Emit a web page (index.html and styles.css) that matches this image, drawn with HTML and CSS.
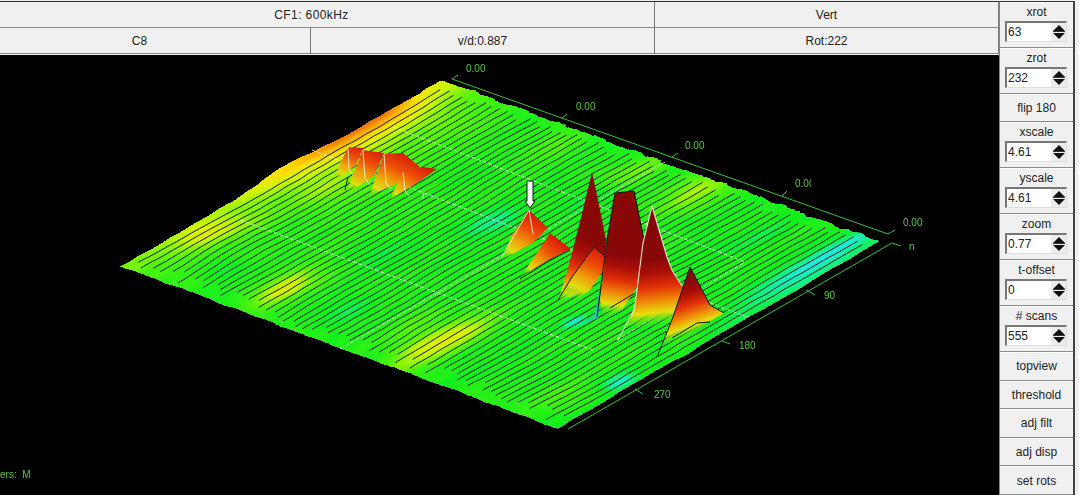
FILE: index.html
```html
<!DOCTYPE html>
<html lang="en">
<head>
<meta charset="utf-8">
<title>CF1: 600kHz</title>
<link rel="stylesheet" href="styles.css">
</head>
<body>
<div class="app">
  <main class="main">
    <header class="readouts">
      <div class="cell cell-wide">CF1: 600kHz</div>
      <div class="cell">Vert</div>
      <div class="cell">C8</div>
      <div class="cell">v/d:0.887</div>
      <div class="cell">Rot:222</div>
    </header>
    <section class="plot">
      <canvas id="surface" class="surface" width="999" height="440"></canvas>
      <span class="tag t0">0.00</span>
      <span class="tag t1">0.00</span>
      <span class="tag t2">0.00</span>
      <span class="tag t3">0.00</span>
      <span class="tag t4">0.00</span>
      <span class="tag a0">n</span>
      <span class="tag a90">90</span>
      <span class="tag a180">180</span>
      <span class="tag a270">270</span>
      <span class="tag legend">ers:  M</span>
    </section>
  </main>
  <aside class="panel">
    <div class="group"><label class="caption">xrot</label><div class="field"><span class="value">63</span><span class="spin"><i class="up"></i><i class="down"></i></span></div></div>
    <div class="group"><label class="caption">zrot</label><div class="field"><span class="value">232</span><span class="spin"><i class="up"></i><i class="down"></i></span></div></div>
    <button class="btn">flip 180</button>
    <div class="group"><label class="caption">xscale</label><div class="field"><span class="value">4.61</span><span class="spin"><i class="up"></i><i class="down"></i></span></div></div>
    <div class="group"><label class="caption">yscale</label><div class="field"><span class="value">4.61</span><span class="spin"><i class="up"></i><i class="down"></i></span></div></div>
    <div class="group"><label class="caption">zoom</label><div class="field"><span class="value">0.77</span><span class="spin"><i class="up"></i><i class="down"></i></span></div></div>
    <div class="group"><label class="caption">t-offset</label><div class="field"><span class="value">0</span><span class="spin"><i class="up"></i><i class="down"></i></span></div></div>
    <div class="group"><label class="caption"># scans</label><div class="field"><span class="value">555</span><span class="spin"><i class="up"></i><i class="down"></i></span></div></div>
    <button class="btn">topview</button>
    <button class="btn">threshold</button>
    <button class="btn">adj filt</button>
    <button class="btn">adj disp</button>
    <button class="btn">set rots</button>
  </aside>
</div>
<script src="plot.js"></script>
</body>
</html>
```
FILE: styles.css
```css
* { box-sizing: border-box; }
html, body { margin: 0; height: 100%; overflow: hidden; }
body {
  background: #f0f0f0;
  color: #222;
  font: 12px/1 "Liberation Sans", Arial, sans-serif;
}
.app {
  display: flex;
  width: 1079px;
  height: 495px;
  padding-top: 1px;
  background: #f0f0f0;
}
.main {
  display: flex;
  flex-direction: column;
  width: 999px;
  overflow: hidden;
}
.readouts {
  display: grid;
  grid-template-columns: 342px 344px 344px;
  grid-template-rows: 26px 26px;
  width: 1030px;
  margin-left: -31px;
  padding-bottom: 1px;
  height: 54px;
  border-top: 1px solid #333;
  background: #f0f0f0;
}
.cell {
  display: flex;
  align-items: center;
  justify-content: center;
  border-right: 1px solid #777;
  border-bottom: 1px solid #888;
  background: #f0f0f0;
}
.cell-wide { grid-column: span 2; letter-spacing: .4px; }
.plot {
  position: relative;
  flex: 1;
  background: #000;
  overflow: hidden;
}
.surface { display: block; }
.tag {
  position: absolute;
  color: #58c84a;
  font-size: 10px;
  line-height: 12px;
  white-space: pre;
}
.t0 { left: 466px; top: 8px; }
.t1 { left: 576px; top: 46px; }
.t2 { left: 685px; top: 85px; }
.t3 { left: 795px; top: 123px; width: 16px; overflow: hidden; }
.t4 { left: 903px; top: 162px; }
.a0 { left: 909px; top: 186px; }
.a90 { left: 824px; top: 235px; }
.a180 { left: 739px; top: 285px; }
.a270 { left: 654px; top: 334px; }
.legend { left: 0; top: 414px; }
.panel {
  display: flex;
  flex-direction: column;
  width: 76px;
  height: 494px;
  border-top: 1px solid #333;
  border-right: 2px solid #444;
  border-left: 1px solid #888;
}
.group, .btn {
  border: 0;
  border-top: 1px solid #fff;
  border-bottom: 1px solid #8a8a8a;
  background: #f0f0f0;
}
.group {
  flex: 45.6 1 0;
  display: flex;
  flex-direction: column;
  align-items: center;
  padding-top: 2px;
}
.btn {
  flex: 29 1 0;
  margin: 0;
  padding: 0;
  color: #222;
  font: inherit;
}
.caption { height: 16px; line-height: 14px; }
.field {
  display: flex;
  align-items: center;
  justify-content: space-between;
  align-self: flex-start;
  width: 62px;
  height: 21px;
  margin-left: 5px;
  border: 1px solid #ddd;
  border-top: 2px solid #777;
  border-left: 2px solid #777;
  background: #fff;
}
.value { padding-left: 1px; }
.spin {
  display: flex;
  flex-direction: column;
  align-items: center;
  gap: 2px;
  width: 15px;
  height: 100%;
  padding-top: 2px;
  background: linear-gradient(#333, #333) center 8px / 12px 1px no-repeat, #ececec;
}
.up, .down {
  display: block;
  width: 0;
  height: 0;
  border-left: 6px solid transparent;
  border-right: 6px solid transparent;
}
.up { border-bottom: 6px solid #111; }
.down { border-top: 6px solid #111; }
```
FILE: plot.js
```js
(function () {
  var canvas = document.getElementById('surface');
  var ctx = canvas.getContext('2d');
  var W = canvas.width, H = canvas.height, TOP = 55;
  var D = [123, 267], A = [445, 80], C = [557, 428];
  var ax = A[0] - D[0], ay = A[1] - D[1], cx = C[0] - D[0], cy = C[1] - D[1];
  var det = ax * cy - ay * cx;

  function toUV(px, py) {
    var x = px - D[0], y = py - D[1];
    return [(x * cy - y * cx) / det, (ax * y - ay * x) / det];
  }
  function hash(i, j) {
    var s = Math.sin(i * 127.1 + j * 311.7) * 43758.5453;
    return s - Math.floor(s);
  }
  function noise(x, y) {
    var i = Math.floor(x), j = Math.floor(y), f = x - i, g = y - j;
    f = f * f * (3 - 2 * f); g = g * g * (3 - 2 * g);
    var a = hash(i, j), b = hash(i + 1, j), c = hash(i, j + 1), d = hash(i + 1, j + 1);
    return a + (b - a) * f + (c - a) * g + (a - b - c + d) * f * g;
  }
  function smooth(a, b, x) {
    var t = Math.max(0, Math.min(1, (x - a) / (b - a)));
    return t * t * (3 - 2 * t);
  }

  var ramp = [
    [0.00, 30, 235, 215], [0.18, 16, 242, 130], [0.34, 16, 240, 30], [0.50, 90, 244, 10],
    [0.66, 205, 244, 6], [0.80, 250, 225, 6], [0.92, 250, 170, 4], [1.00, 244, 120, 4]
  ];
  function colour(t) {
    t = Math.max(0, Math.min(1, t));
    for (var i = 1; i < ramp.length; i++) {
      if (t <= ramp[i][0]) {
        var a = ramp[i - 1], b = ramp[i], f = (t - a[0]) / (b[0] - a[0]);
        return [a[1] + (b[1] - a[1]) * f, a[2] + (b[2] - a[2]) * f, a[3] + (b[3] - a[3]) * f];
      }
    }
    return ramp[ramp.length - 1].slice(1);
  }

  // x, y on screen, spread along the scan, spread across the scans, amount
  var blobs = [
    [285, 288, .10, .035, .32], [435, 345, .14, .04, .34], [410, 325, .09, .03, .12],
    [700, 190, .11, .04, .24], [640, 170, .09, .035, .14], [555, 145, .09, .035, .10],
    [205, 235, .09, .035, .20], [470, 330, .09, .03, .08], [560, 395, .08, .03, .10],
    [225, 270, .05, .03, -.10], [380, 255, .07, .03, -.08], [350, 310, .06, .03, -.10],
    [805, 268, .17, .028, -.32], [845, 245, .07, .012, -.24], [620, 382, .04, .02, -.34],
    [495, 222, .07, .03, -.22], [575, 322, .03, .016, -.34], [590, 200, .07, .03, -.08],
    [760, 235, .08, .03, -.08], [480, 175, .09, .03, -.04], [660, 245, .06, .03, .08],
    [325, 190, .09, .035, .14], [250, 225, .08, .03, .10]
  ].map(function (b) {
    var p = toUV(b[0], b[1]);
    return [p[0], p[1], b[2], b[3], b[4]];
  });

  function field(u, v) {
    var t = .37;
    for (var i = 0; i < blobs.length; i++) {
      var b = blobs[i], du = (u - b[0]) / b[2], dv = (v - b[1]) / b[3];
      t += b[4] * Math.exp(-(du * du + dv * dv));
    }
    // warm ridge along the top-left edge, easing off at the far tip
    var ridge = .2 + .44 * smooth(.25, .75, u) - .3 * smooth(.8, 1, u);
    t += ridge * Math.exp(-Math.max(0, v) / .07);
    // cooler along the front-right edge
    t -= .12 * smooth(.94, 1, v) * smooth(.4, .7, u);
    t += .06 * (noise(u * 9, v * 45) - .5) + .025 * (noise(u * 30, v * 90) - .5);
    return t;
  }

  var img = ctx.createImageData(W, H), data = img.data;
  for (var y = 0; y < H; y++) {
    for (var x = 100; x < 910; x++) {
      var uv = toUV(x + .5, y + TOP + .5), u = uv[0], v = uv[1];
      var lowV = -.003 - .013 * Math.exp(-Math.pow((u - .52) / .11, 2)) - .003 * noise(u * 40, 3);
      var lowU = .006 * (noise(v * 30, 7) - .5) - .002 * hash(Math.floor(v * 140), 9);
      var highU = 1 + .01 * (noise(v * 45, 11) - .6) - .004 * hash(Math.floor(v * 160), 2);
      var highV = 1 + .005 * noise(u * 20, 5);
      if (u < lowU || u > highU || v < lowV || v > highV) continue;
      var rgb = colour(field(u, v));
      var i = 4 * (y * W + x);
      data[i] = rgb[0]; data[i + 1] = rgb[1]; data[i + 2] = rgb[2]; data[i + 3] = 255;
    }
  }
  ctx.putImageData(img, 0, 0);
  ctx.translate(0, -TOP);

  function path(pts) {
    ctx.beginPath();
    pts.forEach(function (p, i) { if (i) ctx.lineTo(p[0], p[1]); else ctx.moveTo(p[0], p[1]); });
  }
  function line(pts, colourName, width, dash) {
    path(pts);
    ctx.strokeStyle = colourName;
    ctx.lineWidth = width || 1;
    ctx.setLineDash(dash || []);
    ctx.stroke();
    ctx.setLineDash([]);
  }

  // scan traces
  var SCANS = 62;
  for (var k = 1; k < SCANS; k++) {
    var start = .012 + .05 * hash(k, 4), end = .985 - .025 * hash(k, 8), trace = [];
    for (var s = start; s < end; s += .008) {
      var off = .75 * (noise(s * 5, k * .14) - .5) + .14 * (noise(s * 26, k * .6) - .5);
      var tv = (k + off) / SCANS;
      trace.push([D[0] + s * ax + tv * cx, D[1] + s * ay + tv * cy]);
    }
    line(trace, '#061408', 1);
  }

  var WHITE = 'rgba(230,252,220,.85)', DASH = [4, 2];
  line([[393, 127], [745, 262]], WHITE, 1, DASH);
  line([[312, 150], [747, 317]], WHITE, 1, DASH);
  line([[240, 220], [593, 350]], WHITE, 1, DASH);
  line([[340, 349], [665, 162]], WHITE, 1, DASH);
  line([[617, 340], [745, 262]], WHITE, 1, DASH);

  var FULL = [[0, '#880808'], [.2, '#a80e08'], [.42, '#e03008'], [.62, '#f08808'], [.8, '#e6e010'], [1, 'rgba(60,228,30,0)']];
  var LOW = [[0, '#d81c08'], [.3, '#ee5008'], [.55, '#f0a008'], [.78, '#dce010'], [1, 'rgba(60,228,30,0)']];
  function peak(pts, g, stops) {
    var gr = ctx.createLinearGradient(g[0], g[1], g[2], g[3]);
    stops.forEach(function (s) { gr.addColorStop(s[0], s[1]); });
    path(pts);
    ctx.closePath();
    ctx.fillStyle = gr;
    ctx.fill();
  }

  // far group, upper left
  peak([[348, 147], [363, 148], [356, 165], [340, 178], [333, 180]], [355, 145, 338, 182], LOW);
  peak([[363, 150], [384, 153], [374, 176], [356, 188], [346, 193]], [373, 148, 350, 194], LOW);
  peak([[384, 154], [403, 153], [420, 167], [396, 184], [378, 192], [368, 199]], [396, 150, 372, 200], LOW);
  peak([[403, 172], [423, 167], [437, 169], [414, 185], [396, 196], [388, 203]], [420, 164, 396, 206], LOW);
  peak([[423, 190], [445, 181], [415, 200], [405, 205]], [445, 180, 405, 205], [[0, 'rgba(200,232,16,.7)'], [1, 'rgba(60,228,30,0)']]);
  line([[348, 147], [349, 170], [353, 175]], WHITE);
  line([[363, 150], [365, 178], [370, 185]], WHITE);
  line([[384, 154], [386, 183], [392, 190]], WHITE);
  line([[403, 172], [405, 191], [410, 197]], WHITE);
  line([[423, 193], [423, 199]], WHITE);
  line([[348, 177], [345, 190]], '#0a1a0a');

  // two small peaks beside the marker
  peak([[529, 210], [548, 228], [534, 242], [510, 256], [500, 263], [512, 235]], [532, 214, 506, 262], LOW);
  peak([[550, 233], [571, 249], [552, 258], [535, 268], [519, 279], [535, 256]], [556, 238, 524, 278], LOW);
  line([[529, 210], [533, 234]], WHITE);
  line([[529, 210], [514, 236], [501, 258]], WHITE);
  line([[520, 279], [549, 261], [570, 250]], '#0a1a0a');

  // blue base of the flat-topped peak
  peak([[604, 270], [598, 318], [581, 325], [594, 316]], [600, 275, 585, 325], [[0, '#3090d0'], [1, '#20d8b8']]);

  // tall peaks, back to front
  peak([[592, 172], [598, 200], [606, 240], [604, 268], [582, 293], [558, 301], [568, 268], [580, 222]], [590, 240, 560, 305], FULL);
  peak([[558, 300], [572, 277], [594, 247], [606, 257], [604, 270], [590, 290], [570, 305], [556, 312]], [598, 250, 574, 300], LOW);
  peak([[615, 193], [634, 191], [644, 240], [638, 285], [622, 310], [603, 320], [600, 300], [604, 270], [607, 240]], [628, 255, 618, 318], FULL);
  peak([[652, 206], [667, 257], [672, 270], [684, 288], [672, 330], [640, 340], [618, 342], [635, 306], [643, 243]], [660, 258, 668, 325], FULL);
  peak([[690, 267], [710, 305], [724, 313], [702, 326], [675, 342], [658, 357], [673, 317]], [680, 285, 697, 335], FULL);

  var DARK = '#0a140a';
  line([[558, 300], [572, 277], [594, 247], [606, 257]], DARK);
  line([[597, 317], [603, 270], [607, 240], [615, 193], [634, 191], [644, 240]], DARK);
  line([[610, 308], [630, 296], [636, 293]], DARK);
  line([[652, 206], [643, 243], [637, 290], [634, 310], [618, 340]], WHITE, 1.2);
  line([[652, 206], [667, 257], [672, 270], [682, 286]], WHITE, 1.2);
  line([[690, 267], [673, 317], [657, 357]], DARK);
  line([[690, 267], [710, 305], [724, 313]], DARK);
  line([[672, 338], [697, 323], [710, 322]], DARK);

  // marker arrow
  path([[527, 181], [533, 181], [533, 201], [535, 201], [530, 208], [525, 201], [527, 201]]);
  ctx.closePath();
  ctx.fillStyle = '#fff';
  ctx.fill();
  ctx.strokeStyle = '#111';
  ctx.lineWidth = 1;
  ctx.stroke();

  // axes
  var AXIS = '#3cc03c';
  line([[452, 79], [888, 234], [895, 230]], AXIS);
  line([[901, 246], [892, 243], [568, 429]], AXIS);
  [[[452, 79], [458, 75]], [[562, 118], [567, 114]], [[672, 157], [678, 153]], [[782, 196], [787, 191]],
   [[806, 290], [815, 295]], [[722, 341], [730, 344]], [[635, 389], [643, 394]]].forEach(function (t) {
    line(t, AXIS);
  });
})();
```
